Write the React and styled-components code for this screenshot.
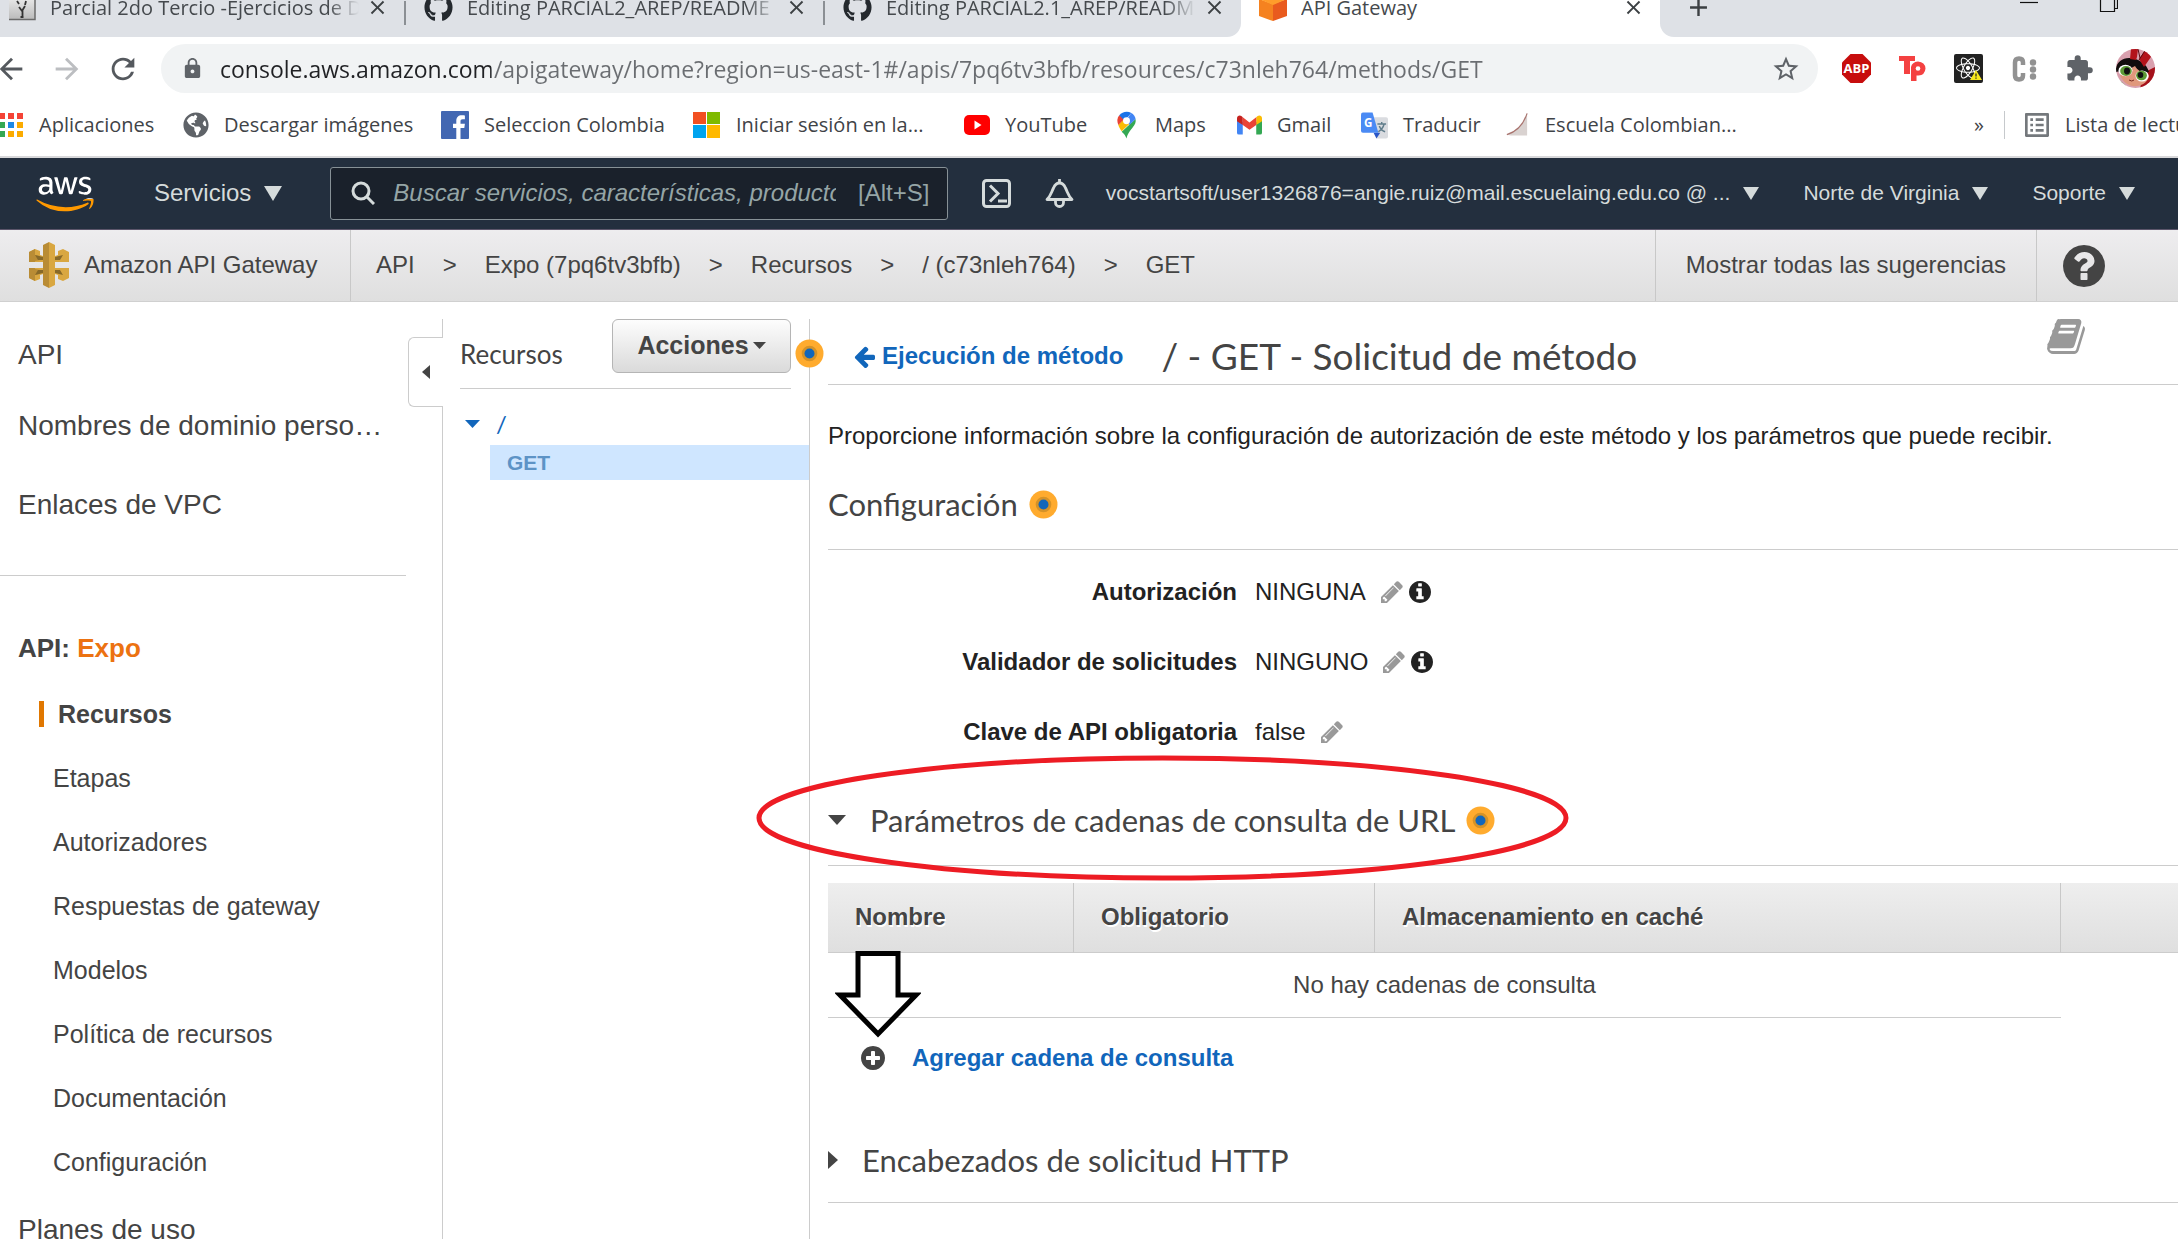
import React from "react";
import styled, { createGlobalStyle } from "styled-components";
import { FaGithub, FaAws, FaReact, FaGlobeAmericas } from "react-icons/fa";
import {
  MdArrowBack,
  MdArrowForward,
  MdRefresh,
  MdLock,
  MdStarBorder,
  MdExtension,
  MdClose,
  MdAdd,
  MdListAlt,
} from "react-icons/md";

const ui = `"Segoe UI", "Open Sans", "Noto Sans", sans-serif`;
const arial = `"Liberation Sans", Arial, sans-serif`;
const lato = `Lato, sans-serif`;

const GlobalStyle = createGlobalStyle`
  *, *::before, *::after { box-sizing: border-box; }
  body { margin: 0; overflow: hidden; background: #fff; color: #444; font-family: ${arial}; }
  button { border: 0; padding: 0; background: none; font: inherit; color: inherit; display: inline-flex; align-items: center; }
  a { color: inherit; text-decoration: none; }
  h1, h2, p, ul { margin: 0; padding: 0; font-weight: 400; }
  li { list-style: none; }
  svg { display: block; flex: none; }
`;

const Page = styled.div`
  display: flex;
  flex-direction: column;
  height: 100vh;
  overflow: hidden;
`;

/* ---------- browser tabs ---------- */

const TabStrip = styled.div`
  display: flex;
  align-items: flex-end;
  flex: none;
  height: 37px;
  overflow: hidden;
  background: #fff;
  font: 20px ${ui};
  color: #45494d;
`;

const TabsLeft = styled.div`
  display: flex;
  align-items: flex-end;
  flex: none;
  width: 1241px;
  height: 60px;
  background: #dee1e6;
  border-radius: 0 0 14px 0;
`;

const Tab = styled.div`
  display: flex;
  align-items: center;
  flex: none;
  width: ${(p) => p.$width}px;
  height: 60px;
  padding: 0 15px 0 ${(p) => (p.$first ? 8 : 18)}px;
  background: ${(p) => (p.$active ? "#fff" : "transparent")};
`;

const TabTitle = styled.span`
  flex: 1;
  min-width: 0;
  margin: 0 7px 0 14px;
  overflow: hidden;
  white-space: nowrap;
  mask-image: ${(p) => (p.$fade ? "linear-gradient(90deg, #000 90%, transparent 100%)" : "none")};
`;

const TabDivider = styled.span`
  flex: none;
  width: 2px;
  height: 24px;
  margin-bottom: 12px;
  background: #8b8f94;
`;

const StripEnd = styled.div`
  display: flex;
  align-items: center;
  justify-content: space-between;
  flex: 1;
  height: 60px;
  padding: 0 60px 0 24px;
  background: #dee1e6;
  border-radius: 0 0 0 14px;
`;

const Spacer = styled.span`
  flex: 1;
`;

/* ---------- toolbar ---------- */

const Toolbar = styled.div`
  display: flex;
  align-items: center;
  flex: none;
  height: 63px;
  padding: 0 23px 0 0;
  color: #5f6368;
`;

const NavButtons = styled.div`
  display: flex;
  flex: none;
  gap: 22px;
  width: 161px;
  margin-left: -6px;
  margin-right: 6px;
`;

const NavButton = styled.button`
  justify-content: center;
  width: 34px;
  color: ${(p) => (p.$dim ? "#bcbec1" : "#55595e")};
`;

const Omnibox = styled.label`
  display: flex;
  align-items: center;
  flex: 1;
  min-width: 0;
  height: 49px;
  padding: 0 17px 0 20px;
  border-radius: 25px;
  background: #f1f3f4;
`;

const UrlInput = styled.input`
  flex: 1;
  min-width: 0;
  margin: 0 0 0 16px;
  padding: 0;
  border: 0;
  outline: 0;
  font: 23px ${ui};
  color: #6a6d71;
  background: linear-gradient(90deg, #202124 271px, #6a6d71 271px);
  -webkit-background-clip: text;
  background-clip: text;
  -webkit-text-fill-color: transparent;
`;

const Extensions = styled.div`
  display: flex;
  align-items: center;
  flex: none;
  gap: 28px;
  margin: 0 22px 0 24px;
`;

/* ---------- bookmarks ---------- */

const BookmarkBar = styled.nav`
  display: flex;
  align-items: center;
  flex: none;
  height: 58px;
  padding-bottom: 7px;
  border-bottom: 2px solid #d8d8da;
  font: 20px ${ui};
  color: #3f4347;
  white-space: nowrap;
`;

const Bookmark = styled.a`
  display: flex;
  align-items: center;
  flex: none;
  gap: 15px;
  width: ${(p) => p.$width}px;
  &:first-child { margin-left: -5px; }
`;

const ReadingList = styled.a`
  display: flex;
  align-items: center;
  flex: none;
  gap: 12px;
  width: 174px;
  height: 28px;
  margin-left: 20px;
  padding-left: 16px;
  border-left: 1px solid #c6c9cc;
`;

/* ---------- AWS bar ---------- */

const AwsBar = styled.header`
  display: flex;
  align-items: center;
  flex: none;
  height: 72px;
  padding: 0 43px 0 36px;
  background: #232f3e;
  border-bottom: 1px solid #5c566b;
  color: #d5dbdb;
`;

const MenuButton = styled.button`
  flex: none;
  gap: 13px;
  margin-left: ${(p) => (p.$large ? 60 : 0)}px;
  padding-bottom: 1px;
  font-size: ${(p) => (p.$large ? 24 : 21)}px;
  line-height: 28px;
  white-space: nowrap;
`;

const SearchBox = styled.label`
  display: flex;
  align-items: center;
  flex: none;
  width: 618px;
  height: 53px;
  margin-left: 48px;
  padding: 0 18px 2px 20px;
  border: 1px solid #879196;
  border-radius: 3px;
  background: #1a212b;
  font-size: 24px;
  color: #95a5a6;
`;

const SearchInput = styled.input`
  flex: 1;
  min-width: 0;
  margin: 0 22px 0 18px;
  padding: 0;
  border: 0;
  outline: 0;
  background: none;
  font: italic 24px ${arial};
  &::placeholder { color: #95a5a6; opacity: 1; }
`;

const BarIcon = styled.button`
  flex: none;
  margin-left: 34px;
`;

const AccountGroup = styled.div`
  display: flex;
  flex: 1;
  justify-content: flex-end;
  gap: 44px;
`;

/* ---------- breadcrumb bar ---------- */

const CrumbBar = styled.div`
  display: flex;
  align-items: stretch;
  flex: none;
  height: 72px;
  background: linear-gradient(#eeedef, #dfdfdf);
  border-bottom: 1px solid #d0d0d0;
  font-size: 24px;
  white-space: nowrap;
`;

const Brand = styled.a`
  display: flex;
  align-items: center;
  flex: none;
  gap: 15px;
  width: 351px;
  padding: 0 0 2px 29px;
  border-right: 1px solid #c8c8c8;
`;

const Crumbs = styled.nav`
  display: flex;
  align-items: center;
  flex: 1;
  gap: 28px;
  padding: 0 0 2px 25px;
`;

const Hints = styled.a`
  display: flex;
  align-items: center;
  flex: none;
  padding: 0 30px 2px;
  border-left: 1px solid #c8c8c8;
  border-right: 1px solid #c8c8c8;
`;

const HelpButton = styled.button`
  flex: none;
  justify-content: center;
  width: 141px;
  padding-right: 47px;
`;

/* ---------- body ---------- */

const Body = styled.div`
  display: flex;
  flex: 1;
  min-height: 0;
  padding-top: 17px;
`;

const Sidebar = styled.aside`
  position: relative;
  flex: none;
  width: 443px;
  border-right: 1px solid #ccc;
`;

const SideLink = styled.a`
  display: block;
  margin-top: ${(p) => (p.$spaced ? 8 : 0)}px;
  padding-left: 18px;
  font-size: 28px;
  line-height: 71px;
`;

const SideDivider = styled.div`
  width: 406px;
  margin: 35px 0 40px;
  border-top: 1px solid #ccc;
`;

const ApiName = styled.div`
  padding-left: 18px;
  margin-bottom: 2px;
  font-size: 26px;
  line-height: 64px;
  font-weight: 700;
  span { color: #ec7211; }
`;

const SubLink = styled.a`
  display: flex;
  align-items: center;
  height: 64px;
  padding-left: ${(p) => (p.$active ? 39 : 53)}px;
  font-size: 25px;
  font-weight: ${(p) => (p.$active ? 700 : 400)};
  &::before {
    content: "";
    display: ${(p) => (p.$active ? "block" : "none")};
    width: 5px;
    height: 26px;
    margin-right: 14px;
    background: #e07700;
  }
`;

const CollapseHandle = styled.button`
  position: absolute;
  top: 18px;
  right: -1px;
  width: 35px;
  height: 70px;
  padding-left: 13px;
  background: #fff;
  border: 1px solid #ccc;
  border-right: 0;
  border-radius: 6px 0 0 6px;
`;

const Resources = styled.section`
  position: relative;
  flex: none;
  width: 367px;
  padding-left: 17px;
  border-right: 1px solid #ccc;
`;

const ResourcesHead = styled.div`
  display: flex;
  align-items: flex-start;
  justify-content: space-between;
  height: 70px;
  margin-right: 18px;
  border-bottom: 1px solid #ccc;
`;

const ResourcesTitle = styled.h2`
  font: 26px/70px ${lato};
`;

const ActionsButton = styled.button`
  justify-content: center;
  gap: 4px;
  width: 179px;
  height: 54px;
  padding-bottom: 2px;
  border: 1px solid #b5b5b5;
  border-radius: 6px;
  background: linear-gradient(#fdfdfd, #dadada);
  font-size: 25px;
  font-weight: 700;
`;

const PanelMarker = styled.div`
  position: absolute;
  top: 20px;
  right: -15px;
`;

const Tree = styled.ul`
  display: flex;
  flex-direction: column;
  gap: 3px;
  padding-top: 18px;
`;

const TreeRoot = styled.li`
  display: flex;
  align-items: center;
  gap: 16px;
  height: 35px;
  padding: 0 0 2px 5px;
  font: 24px ${lato};
  color: #1166bb;
`;

const TreeMethod = styled.li`
  margin-left: 30px;
  padding-left: 17px;
  background: #cfe6ff;
  font-size: 21px;
  line-height: 35px;
  font-weight: 700;
  color: #5d93c6;
`;

const Main = styled.main`
  flex: 1;
  min-width: 0;
  padding-left: 18px;
`;

const TitleRow = styled.div`
  display: flex;
  align-items: center;
  height: 66px;
  padding-top: 7px;
  padding-left: 26px;
  border-bottom: 1px solid #ccc;
`;

const BackLink = styled.a`
  display: flex;
  align-items: center;
  gap: 7px;
  padding-top: 2px;
  font-size: 24px;
  font-weight: 700;
  color: #1166bb;
`;

const Title = styled.h1`
  flex: 1;
  margin-left: 38px;
  font: 37px ${lato};
`;

const BookButton = styled.button`
  align-self: flex-start;
  margin: -7px 93px 0 0;
`;

const Intro = styled.p`
  margin: 35px 0 7px;
  font-size: 24px;
  line-height: 32px;
  color: #222;
  white-space: nowrap;
`;

const SectionHead = styled.h2`
  position: relative;
  display: flex;
  align-items: center;
  gap: ${(p) => (p.$toggle ? 24 : 11)}px;
  height: ${(p) => (p.$compact ? 85 : 91)}px;
  border-bottom: 1px solid #ccc;
  font: 31px ${lato};
`;

const HeadLabel = styled.span`
  display: flex;
  align-items: center;
  gap: 11px;
`;

const Fields = styled.div`
  padding: 7px 0 8px;
`;

const Field = styled.div`
  display: grid;
  grid-template-columns: 409px auto;
  justify-content: start;
  align-items: center;
  gap: 18px;
  height: 70px;
  font-size: 24px;
  color: #222;
`;

const FieldLabel = styled.span`
  font-weight: 700;
  text-align: right;
`;

const FieldValue = styled.span`
  display: flex;
  align-items: center;
  gap: 15px;
`;

const FieldIcons = styled.span`
  display: flex;
  align-items: center;
  gap: 6px;
`;

const TableArea = styled.div`
  position: relative;
  margin-top: 17px;
`;

const ParamTable = styled.table`
  width: 100%;
  table-layout: fixed;
  border-collapse: separate;
  border-spacing: 0;
  font-size: 24px;
`;

const HeadCell = styled.th`
  width: ${(p) => p.$width};
  height: 70px;
  padding: 0 0 2px 27px;
  background: linear-gradient(#eee, #dfdfdf);
  border-bottom: 1px solid #ccc;
  border-right: ${(p) => (p.$end ? "0" : "1px solid #c8c8c8")};
  text-align: left;
  text-shadow: 1px 2px 0 #fff;
`;

const EmptyCell = styled.td`
  height: 65px;
  padding: 0;
  border-bottom: 1px solid #ccc;
  text-align: center;
`;

const BlankCell = styled.td`
  padding: 0;
`;

const AddButton = styled.button`
  gap: 27px;
  height: 80px;
  margin-bottom: 20px;
  padding-left: 33px;
  font-size: 24px;
  font-weight: 700;
  color: #1166bb;
`;

const EllipseMark = styled.svg`
  position: absolute;
  left: -72px;
  top: -20px;
  pointer-events: none;
`;

const ArrowMark = styled.svg`
  position: absolute;
  left: 7px;
  top: 67px;
  pointer-events: none;
`;

/* ---------- drawings ---------- */

const CIRCLE =
  "M1664 896q0 209-103 385.5t-279.5 279.5-385.5 103-385.5-103-279.5-279.5-103-385.5 103-385.5 279.5-279.5 385.5-103 385.5 103 279.5 279.5 103 385.5z";

const glyphs = {
  pencil:
    "M491 1536l91-91-235-235-91 91v107h128v128h107zm523-928q0-22-22-22-10 0-17 7l-542 542q-7 7-7 17 0 22 22 22 10 0 17-7l542-542q7-7 7-17zm-54-192l416 416-832 832h-416v-416zm683 96q0 53-37 90l-166 166-416-416 166-165q36-38 90-38 53 0 91 38l235 234q37 39 37 91z",
  info:
    "M1152 1376v-160q0-14-9-23t-23-9h-96v-512q0-14-9-23t-23-9h-320q-14 0-23 9t-9 23v160q0 14 9 23t23 9h96v320h-96q-14 0-23 9t-9 23v160q0 14 9 23t23 9h448q14 0 23-9t9-23zm-128-896v-160q0-14-9-23t-23-9h-192q-14 0-23 9t-9 23v160q0 14 9 23t23 9h192q14 0 23-9t9-23z" +
    CIRCLE,
  plus:
    "M1344 960v-128q0-26-19-45t-45-19h-256v-256q0-26-19-45t-45-19h-128q-26 0-45 19t-19 45v256h-256q-26 0-45 19t-19 45v128q0 26 19 45t45 19h256v256q0 26 19 45t45 19h128q26 0 45-19t19-45v-256h256q26 0 45-19t19-45z" +
    CIRCLE,
  help:
    "M1024 1376v-192q0-14-9-23t-23-9h-192q-14 0-23 9t-9 23v192q0 14 9 23t23 9h192q14 0 23-9t9-23zm256-672q0-88-55.5-163t-138.5-116-170-41q-243 0-371 213-15 24 8 42l132 100q7 6 19 6 16 0 25-12 53-68 86-92 34-24 86-24 48 0 85.5 26t37.5 59q0 38-20 61t-68 45q-63 28-115.5 86.5t-52.5 125.5v36q0 14 9 23t23 9h192q14 0 23-9t9-23q0-19 21.5-49.5t54.5-49.5q32-18 49-28.5t46-35 44.5-48 28-60.5 12.5-81z" +
    CIRCLE,
  arrow:
    "M1664 896v128q0 53-32.5 90.5t-84.5 37.5h-704l293 294q38 36 38 90t-38 90l-75 76q-37 37-90 37-52 0-91-37l-651-652q-37-37-37-90 0-52 37-91l651-650q38-38 91-38 52 0 90 38l75 74q38 38 38 91t-38 91l-293 293h704q52 0 84.5 37.5t32.5 90.5z",
  book:
    "M1639 478q40 57 18 129l-275 906q-19 64-76.5 107.5t-122.5 43.5h-923q-77 0-148.5-53.5t-99.5-131.5q-24-67-2-127 0-4 3-27t4-37q1-8-3-21.5t-3-19.5q2-11 8-21t16.5-23.5 16.5-23.5q23-38 45-91.5t30-91.5q3-10 .5-30t-.5-28q3-11 17-28t17-23q21-36 42-92t25-90q1-9-2.5-32t.5-28q4-13 22-30.5t22-22.5q19-26 42.5-84.5t27.5-96.5q1-8-3-25.5t-2-26.5q2-8 9-18t18-23 17-21q8-12 16.5-30.5t15-35 16-36 19.5-32 26.5-23.5 36-11.5 47.5 5.5l-1 3q38-9 51-9h761q74 0 114 56t18 130l-274 906q-36 119-71.5 153.5t-128.5 34.5h-869q-27 0-38 15-11 16-1 43 24 70 144 70h923q29 0 56-15.5t35-41.5l300-987q7-22 5-57 38 15 59 43zm-1064 2q-4 13 2 22.5t20 9.5h608q13 0 25.5-9.5t16.5-22.5l21-64q4-13-2-22.5t-20-9.5h-608q-13 0-25.5 9.5t-16.5 22.5zm-83 256q-4 13 2 22.5t20 9.5h608q13 0 25.5-9.5t16.5-22.5l21-64q4-13-2-22.5t-20-9.5h-608q-13 0-25.5 9.5t-16.5 22.5z",
};

function Glyph({ name, size, color = "currentColor" }) {
  return (
    <svg width={size} height={size} viewBox="128 128 1536 1536" overflow="visible" fill={color} fillRule="evenodd" aria-hidden="true">
      <path d={glyphs[name]} />
    </svg>
  );
}

function Caret({ w, h, dir = "down", color = "currentColor" }) {
  const pts = {
    down: `0,0 ${w},0 ${w / 2},${h}`,
    left: `${w},0 ${w},${h} 0,${h / 2}`,
    right: `0,0 ${w},${h / 2} 0,${h}`,
  };
  return (
    <svg width={w} height={h} fill={color} aria-hidden="true">
      <polygon points={pts[dir]} />
    </svg>
  );
}

function Marker() {
  return (
    <svg width="29" height="29" viewBox="0 0 29 29" aria-hidden="true">
      <circle cx="14.5" cy="14.5" r="14" fill="#ffab2e" />
      <circle cx="14.5" cy="14.5" r="7.8" fill="#d59227" />
      <circle cx="14.5" cy="14.5" r="5" fill="#1166bb" />
    </svg>
  );
}

function DocIcon() {
  return (
    <svg width="28" height="28" viewBox="0 0 28 28" aria-hidden="true">
      <defs>
        <linearGradient id="docFill" x1="0" y1="0" x2="0" y2="1">
          <stop offset="0" stopColor="#f4f4f4" />
          <stop offset="1" stopColor="#b9b9b9" />
        </linearGradient>
      </defs>
      <rect x="1" y="0" width="26" height="27" rx="2" fill="url(#docFill)" />
      <path d="M1 26.500h26V1" stroke="#6b6b6b" strokeWidth="1.500" fill="none" />
      <path d="M9 8l2 3M18 8l-1 4M11 14l3 4 3-5M14.500 17v7M12.500 24h3" stroke="#333" strokeWidth="1.800" fill="none" />
    </svg>
  );
}

function CubeIcon() {
  return (
    <svg width="28" height="30" viewBox="0 0 28 30" aria-hidden="true">
      <path d="M0 7l14 5v17L0 24z" fill="#f58220" />
      <path d="M28 7l-14 5v17l14-5z" fill="#e95b1e" />
      <path d="M0 7l14-6 14 6-14 6z" fill="#ff9d2b" />
    </svg>
  );
}

function AppsIcon() {
  const c = ["#f44336", "#f44336", "#f44336", "#34a853", "#1e88e5", "#fbab00", "#34a853", "#fbab00", "#fbab00"];
  return (
    <svg width="29" height="24" viewBox="0 0 29 24" aria-hidden="true">
      {c.map((f, i) => (
        <rect key={i} x={4 + (i % 3) * 9} y={Math.floor(i / 3) * 9} width="6" height="6" fill={f} />
      ))}
    </svg>
  );
}

function FacebookIcon() {
  return (
    <svg width="28" height="28" viewBox="0 0 28 28" aria-hidden="true">
      <rect width="28" height="28" rx="1" fill="#4267b2" />
      <path d="M19.500 28V17h3.800l.6-4.200h-4.400v-2.500c0-1.300.5-2.100 2.200-2.100h2.200V4.500c-.4 0-1.700-.2-3.200-.2-3.300 0-5.400 2-5.400 5.500v3H12V17h3.300v11z" fill="#fff" />
    </svg>
  );
}

function MicrosoftIcon() {
  return (
    <svg width="28" height="28" viewBox="0 0 28 28" aria-hidden="true">
      <path fill="#f25022" d="M0 1h13v12H0z" />
      <path fill="#7fba00" d="M14 1h13v12H14z" />
      <path fill="#00a4ef" d="M0 14h13v13H0z" />
      <path fill="#ffb900" d="M14 14h13v13H14z" />
    </svg>
  );
}

function YouTubeIcon() {
  return (
    <svg width="26" height="20" viewBox="0 0 26 20" aria-hidden="true">
      <rect width="26" height="20" rx="5" fill="#f00" />
      <path d="M10.500 5.500v9l7-4.500z" fill="#fff" />
    </svg>
  );
}

function MapsIcon() {
  return (
    <svg width="27" height="28" viewBox="0 0 28 28" aria-hidden="true">
      <path d="M14 28c1-5 3-7 6-11 3-3.500 4-6 3.400-9.300L9 21c3 3 4 4 5 7z" fill="#34a853" />
      <path d="M5.500 14c.8 2.500 2 4.500 3.500 6.500L18 12l-6-5z" fill="#fbbc04" />
      <path d="M6.500 4C4 7 4 10.500 5.500 14l7-7z" fill="#ea4335" />
      <path d="M6.500 4C9.500 0 15 -.8 19 1.500l-7 8z" fill="#1a73e8" />
      <path d="M19 1.500c2.300 1.300 3.900 3.500 4.400 6.200L17 14l-3-6z" fill="#4285f4" />
      <circle cx="14" cy="9.500" r="3.600" fill="#fff" />
    </svg>
  );
}

function GmailIcon() {
  return (
    <svg width="25" height="20" viewBox="0 0 26 20" aria-hidden="true">
      <path d="M0 3v15a2 2 0 0 0 2 2h4V7z" fill="#4285f4" />
      <path d="M26 3v15a2 2 0 0 1-2 2h-4V7z" fill="#34a853" />
      <path d="M20 2v8l6-4V3c0-3-3-3.500-4.500-2.400z" fill="#fbbc04" />
      <path d="M0 3v3l6 4V2L4.500.6C3-.500 0 0 0 3z" fill="#c5221f" />
      <path d="M6 2v8l7 5 7-5V2l-7 5.300z" fill="#ea4335" />
    </svg>
  );
}

function TranslateIcon() {
  return (
    <svg width="27" height="28" viewBox="0 0 28 28" aria-hidden="true">
      <path d="M12 6h14a2 2 0 0 1 2 2v18a2 2 0 0 1-2 2H16z" fill="#dadce0" />
      <path d="M13 22h7l-4 6z" fill="#2a56c6" />
      <path d="M2 1h10l6 21H2a2 2 0 0 1-2-2V3a2 2 0 0 1 2-2z" fill="#4a8af4" />
      <text x="3" y="16" fontFamily="Open Sans, sans-serif" fontWeight="700" fontSize="12" fill="#fff">G</text>
      <path d="M17 13h9M21.500 11v2M24 13c-1 4-3 6-6 8M19 15c1 3 3 5 6 6" stroke="#607d8b" strokeWidth="1.500" fill="none" />
    </svg>
  );
}

function SchoolIcon() {
  return (
    <svg width="27" height="24" viewBox="0 0 28 24" aria-hidden="true">
      <path d="M4 22C14 19 21 12 25 0v23H8z" fill="#d9d2d0" />
      <path d="M4 22C14 19 21 12 25 0" stroke="#a8736e" strokeWidth="1.200" fill="none" />
    </svg>
  );
}

function AbpIcon() {
  return (
    <svg width="29" height="29" viewBox="0 0 29 29" aria-hidden="true">
      <path d="M8.500 0h12L29 8.500v12L20.500 29h-12L0 20.500v-12z" fill="#c70d0d" />
      <text x="14.5" y="19" textAnchor="middle" fontFamily="Open Sans, sans-serif" fontWeight="700" fontSize="13" fill="#fff">ABP</text>
    </svg>
  );
}

function TpIcon() {
  return (
    <svg width="27" height="27" viewBox="0 0 27 27" aria-hidden="true">
      <path d="M0 1h16v5h-5v13H5V6H0z" fill="#f44141" />
      <path d="M12 26V12q1-5 7-5.500 7 .5 7.500 7-.5 6.500-7 7h-2V26z" fill="#f44141" />
      <circle cx="19" cy="13.500" r="2.300" fill="#fff" />
    </svg>
  );
}

function ReactDevIcon() {
  return (
    <svg width="29" height="29" viewBox="0 0 29 29" aria-hidden="true">
      <rect width="29" height="29" rx="2" fill="#222" />
      <FaReact x="2" y="2" size={24} color="#fff" />
      <path d="M22 16l6 10H16z" fill="#f8e71c" />
      <path d="M22 19.500v3M22 23.500v1.300" stroke="#222" strokeWidth="1.200" />
    </svg>
  );
}

function ColonIcon() {
  return (
    <svg width="26" height="28" viewBox="0 0 26 28" aria-hidden="true" fill="#929292">
      <path d="M12 10V7.500q0-4-4-4t-4 4v13q0 4 4 4t4-4V18" stroke="#929292" strokeWidth="4.500" fill="none" />
      <circle cx="22" cy="7.500" r="3.200" />
      <circle cx="22" cy="14.500" r="3.200" />
      <circle cx="22" cy="21.500" r="3.200" />
    </svg>
  );
}

function Avatar() {
  return (
    <svg width="39" height="39" viewBox="0 0 39 39" role="img" aria-label="Perfil">
      <defs>
        <clipPath id="avatar">
          <circle cx="19.5" cy="19.5" r="19.5" />
        </clipPath>
      </defs>
      <g clipPath="url(#avatar)">
        <rect width="39" height="39" fill="#d9a0ae" />
        <path d="M27 24l12-6v22H24z" fill="#a5121b" />
        <path d="M4 26C7 34 14 38 21 37s11-5 12-10L28 16 12 13z" fill="#e0987c" />
        <path d="M0 23C-1 14 6 8 15 9c8 1 16 6 18 14-6 2-11-1-14-6-5 3-10 4-19 6z" fill="#120d0d" />
        <path d="M14 10L15 0h7l-1 8-1 3zM23 10l7-10 7 5-9 13z" fill="#b3131b" />
        <path d="M22 0l2 9M30 0l-7 11" stroke="#5b0a10" strokeWidth="1" />
        <ellipse cx="9.500" cy="21.500" rx="7" ry="5.800" fill="#fff" />
        <ellipse cx="10" cy="22" rx="5.800" ry="5" fill="#5d9a35" />
        <ellipse cx="11" cy="22" rx="3" ry="3.400" fill="#111" />
        <ellipse cx="26" cy="27" rx="6.500" ry="5.600" fill="#fff" />
        <ellipse cx="25.500" cy="26.500" rx="5.400" ry="4.800" fill="#5d9a35" />
        <ellipse cx="24.500" cy="26" rx="2.800" ry="3" fill="#111" />
        <path d="M13 31q3 2 5 0" stroke="#7a2d22" fill="none" />
        <path d="M0 28l10 9-8 4z" fill="#2f8f3a" />
      </g>
    </svg>
  );
}

function AwsLogo() {
  return (
    <a href="#aws" aria-label="AWS">
      <svg width="58" height="46" viewBox="0 0 640 512" aria-hidden="true">
        <defs>
          <linearGradient id="awsFill" gradientUnits="userSpaceOnUse" x1="0" y1="0" x2="0" y2="512">
            <stop offset="0.615" stopColor="#fff" />
            <stop offset="0.615" stopColor="#f90" />
          </linearGradient>
        </defs>
        <FaAws size={640} x="0" y="-64" fill="url(#awsFill)" />
      </svg>
    </a>
  );
}

function ShellIcon() {
  return (
    <svg width="29" height="29" viewBox="0 0 29 29" fill="none" stroke="#d5dbdb" strokeWidth="3" aria-hidden="true">
      <rect x="1.500" y="1.500" width="26" height="26" rx="3" />
      <path d="M8 6.500l8 8-8 8M16 22h9" />
    </svg>
  );
}

function BellIcon() {
  return (
    <svg width="29" height="29" viewBox="0 0 29 29" fill="none" stroke="#d5dbdb" strokeWidth="2.800" strokeLinejoin="round" aria-hidden="true">
      <path d="M14.500 0v4M2 20.500c4-4 4-6.500 6.500-11.500 1.500-3.500 3-5 6-5s4.500 1.500 6 5c2.500 5 2.500 7.500 6.500 11.500z" />
      <path d="M10.500 21v2.500a4 4 0 0 0 8 0V21" />
    </svg>
  );
}

function GatewayIcon() {
  return (
    <svg width="40" height="46" viewBox="0 0 40 46" aria-hidden="true">
      <path d="M0 10l6-3 5 2v4l3 1v6H0z" fill="#d9a741" />
      <path d="M40 10l-6-3-5 2v4l-3 1v6h14z" fill="#d9a741" />
      <path d="M0 36l6 3 5-2v-4l3-1v-6H0z" fill="#d9a741" />
      <path d="M40 36l-6 3-5-2v-4l-3-1v-6h14z" fill="#d9a741" />
      <path d="M0 10l6-3v6l5 1v4l-5 1v1H0zM0 36l6 3v-6l5-1v-4l-5-1v-1H0z" fill="#b98c35" />
      <path d="M6 13l8 2v3H9zM34 13l-8 2v3h5zM6 33l8-2v-3H9zM34 33l-8-2v-3h5z" fill="#876929" />
      <path d="M14 3l6-3v46l-6-3z" fill="#b98c35" />
      <path d="M26 3l-6-3v46l6-3z" fill="#d9a741" />
    </svg>
  );
}

function WindowControls() {
  return (
    <svg width="98" height="30" viewBox="0 0 98 30" fill="none" stroke="#111" aria-hidden="true">
      <path d="M0 10.500h18" strokeWidth="1.200" />
      <path d="M80.500 0v19.500h14V0M94.500 16.500h3V0" strokeWidth="1.200" />
    </svg>
  );
}

/* ---------- data ---------- */

const bookmarks = [
  { label: "Aplicaciones", icon: <AppsIcon />, width: 188 },
  { label: "Descargar imágenes", icon: <FaGlobeAmericas size={26} color="#5f6368" />, width: 258 },
  { label: "Seleccion Colombia", icon: <FacebookIcon />, width: 252 },
  { label: "Iniciar sesión en la...", icon: <MicrosoftIcon />, width: 271 },
  { label: "YouTube", icon: <YouTubeIcon />, width: 149 },
  { label: "Maps", icon: <MapsIcon />, width: 124 },
  { label: "Gmail", icon: <GmailIcon />, width: 124 },
  { label: "Traducir", icon: <TranslateIcon />, width: 142 },
  { label: "Escuela Colombian...", icon: <SchoolIcon />, width: 240 },
];

const crumbs = ["API", "Expo (7pq6tv3bfb)", "Recursos", "/ (c73nleh764)", "GET"];

const subLinks = [
  "Recursos",
  "Etapas",
  "Autorizadores",
  "Respuestas de gateway",
  "Modelos",
  "Política de recursos",
  "Documentación",
  "Configuración",
];

const fields = [
  { label: "Autorización", value: "NINGUNA", info: true },
  { label: "Validador de solicitudes", value: "NINGUNO", info: true },
  { label: "Clave de API obligatoria", value: "false" },
];

function CloseTab() {
  return (
    <button aria-label="Cerrar pestaña">
      <MdClose size={23} color="#3c4043" />
    </button>
  );
}

export default function App() {
  return (
    <>
      <GlobalStyle />
      <Page>
        <TabStrip>
          <TabsLeft>
            <Tab $width={404} $first>
              <DocIcon />
              <TabTitle $fade>Parcial 2do Tercio -Ejercicios de D</TabTitle>
              <CloseTab />
            </Tab>
            <TabDivider />
            <Tab $width={417}>
              <FaGithub size={29} color="#24292e" />
              <TabTitle $fade>Editing PARCIAL2_AREP/README</TabTitle>
              <CloseTab />
            </Tab>
            <TabDivider />
            <Tab $width={416}>
              <FaGithub size={29} color="#24292e" />
              <TabTitle $fade>Editing PARCIAL2.1_AREP/READM</TabTitle>
              <CloseTab />
            </Tab>
          </TabsLeft>
          <Tab $width={419} $active>
            <CubeIcon />
            <TabTitle>API Gateway</TabTitle>
            <CloseTab />
          </Tab>
          <StripEnd>
            <button aria-label="Nueva pestaña">
              <MdAdd size={29} color="#3c4043" />
            </button>
            <WindowControls />
          </StripEnd>
        </TabStrip>

        <Toolbar>
          <NavButtons>
            <NavButton aria-label="Atrás"><MdArrowBack size={34} /></NavButton>
            <NavButton aria-label="Adelante" $dim><MdArrowForward size={34} /></NavButton>
            <NavButton aria-label="Recargar"><MdRefresh size={34} /></NavButton>
          </NavButtons>
          <Omnibox>
            <MdLock size={23} />
            <UrlInput
              readOnly
              aria-label="Dirección"
              value="console.aws.amazon.com/apigateway/home?region=us-east-1#/apis/7pq6tv3bfb/resources/c73nleh764/methods/GET"
            />
            <MdStarBorder size={30} />
          </Omnibox>
          <Extensions>
            <AbpIcon />
            <TpIcon />
            <ReactDevIcon />
            <ColonIcon />
            <MdExtension size={29} />
          </Extensions>
          <Avatar />
        </Toolbar>

        <BookmarkBar aria-label="Marcadores">
          {bookmarks.map((b) => (
            <Bookmark key={b.label} href="#bookmark" $width={b.width}>
              {b.icon}
              {b.label}
            </Bookmark>
          ))}
          <Spacer />
          <span>»</span>
          <ReadingList href="#lista">
            <MdListAlt size={32} color="#74787c" />
            Lista de lectura
          </ReadingList>
        </BookmarkBar>

        <AwsBar>
          <AwsLogo />
          <MenuButton $large>
            Servicios <Caret w={18} h={15} />
          </MenuButton>
          <SearchBox>
            <svg width="24" height="24" viewBox="0 0 24 24" fill="none" stroke="#d5dbdb" strokeWidth="3" aria-hidden="true">
              <circle cx="10" cy="10" r="8" />
              <path d="M16 16l7 7" />
            </svg>
            <SearchInput aria-label="Buscar" placeholder="Buscar servicios, características, productos" />
            [Alt+S]
          </SearchBox>
          <BarIcon aria-label="CloudShell"><ShellIcon /></BarIcon>
          <BarIcon aria-label="Notificaciones"><BellIcon /></BarIcon>
          <AccountGroup>
            <MenuButton>
              vocstartsoft/user1326876=angie.ruiz@mail.escuelaing.edu.co @ ... <Caret w={16} h={13} />
            </MenuButton>
            <MenuButton>
              Norte de Virginia <Caret w={16} h={13} />
            </MenuButton>
            <MenuButton>
              Soporte <Caret w={16} h={13} />
            </MenuButton>
          </AccountGroup>
        </AwsBar>

        <CrumbBar>
          <Brand href="#apis">
            <GatewayIcon />
            Amazon API Gateway
          </Brand>
          <Crumbs aria-label="Ruta">
            {crumbs.map((c, i) => (
              <React.Fragment key={c}>
                {i > 0 && <span>&gt;</span>}
                <a href="#crumb">{c}</a>
              </React.Fragment>
            ))}
          </Crumbs>
          <Hints href="#sugerencias">Mostrar todas las sugerencias</Hints>
          <HelpButton aria-label="Ayuda"><Glyph name="help" size={42} /></HelpButton>
        </CrumbBar>

        <Body>
          <Sidebar>
            <SideLink href="#api">API</SideLink>
            <SideLink href="#dominios">Nombres de dominio perso…</SideLink>
            <SideLink href="#vpc" $spaced>Enlaces de VPC</SideLink>
            <SideDivider />
            <ApiName>
              API: <span>Expo</span>
            </ApiName>
            {subLinks.map((s, i) => (
              <SubLink key={s} href="#seccion" $active={i === 0}>
                {s}
              </SubLink>
            ))}
            <SideLink href="#planes">Planes de uso</SideLink>
            <CollapseHandle aria-label="Contraer">
              <Caret w={8} h={14} dir="left" />
            </CollapseHandle>
          </Sidebar>

          <Resources>
            <ResourcesHead>
              <ResourcesTitle>Recursos</ResourcesTitle>
              <ActionsButton>
                Acciones <Caret w={13} h={7} />
              </ActionsButton>
            </ResourcesHead>
            <Tree>
              <TreeRoot>
                <Caret w={15} h={8} /> /
              </TreeRoot>
              <TreeMethod>GET</TreeMethod>
            </Tree>
            <PanelMarker><Marker /></PanelMarker>
          </Resources>

          <Main>
            <TitleRow>
              <BackLink href="#metodo">
                <Glyph name="arrow" size={21} />
                Ejecución de método
              </BackLink>
              <Title>/ - GET - Solicitud de método</Title>
              <BookButton aria-label="Documentación">
                <Glyph name="book" size={35} color="#999" />
              </BookButton>
            </TitleRow>
            <Intro>
              Proporcione información sobre la configuración de autorización de este método y los parámetros que puede recibir.
            </Intro>

            <SectionHead>
              Configuración <Marker />
            </SectionHead>
            <Fields>
              {fields.map((f) => (
                <Field key={f.label}>
                  <FieldLabel>{f.label}</FieldLabel>
                  <FieldValue>
                    {f.value}
                    <FieldIcons>
                      <button aria-label={`Editar ${f.label}`}>
                        <Glyph name="pencil" size={22} color="#999" />
                      </button>
                      {f.info && <Glyph name="info" size={22} />}
                    </FieldIcons>
                  </FieldValue>
                </Field>
              ))}
            </Fields>

            <SectionHead $toggle>
              <Caret w={18} h={10} />
              <HeadLabel>
                Parámetros de cadenas de consulta de URL <Marker />
              </HeadLabel>
              <EllipseMark width="813" height="126" viewBox="0 0 813 126" fill="none" aria-hidden="true">
                <ellipse cx="406.5" cy="63" rx="403.5" ry="60" stroke="#ed1c24" strokeWidth="5" />
              </EllipseMark>
            </SectionHead>
            <TableArea>
              <ParamTable>
                <thead>
                  <tr>
                    <HeadCell $width="246px">Nombre</HeadCell>
                    <HeadCell $width="301px">Obligatorio</HeadCell>
                    <HeadCell>Almacenamiento en caché</HeadCell>
                    <HeadCell $width="117px" $end aria-label="Acciones" />
                  </tr>
                </thead>
                <tbody>
                  <tr>
                    <EmptyCell colSpan={3}>No hay cadenas de consulta</EmptyCell>
                    <BlankCell />
                  </tr>
                </tbody>
              </ParamTable>
              <ArrowMark width="86" height="90" viewBox="0 0 86 90" fill="none" stroke="#000" strokeWidth="5" aria-hidden="true">
                <path d="M23 3.500h40V45h18L43 84 5 45h18z" />
              </ArrowMark>
            </TableArea>
            <AddButton>
              <Glyph name="plus" size={24} color="#444" />
              Agregar cadena de consulta
            </AddButton>

            <SectionHead $toggle $compact>
              <Caret w={10} h={18} dir="right" />
              Encabezados de solicitud HTTP
            </SectionHead>
          </Main>
        </Body>
      </Page>
    </>
  );
}
